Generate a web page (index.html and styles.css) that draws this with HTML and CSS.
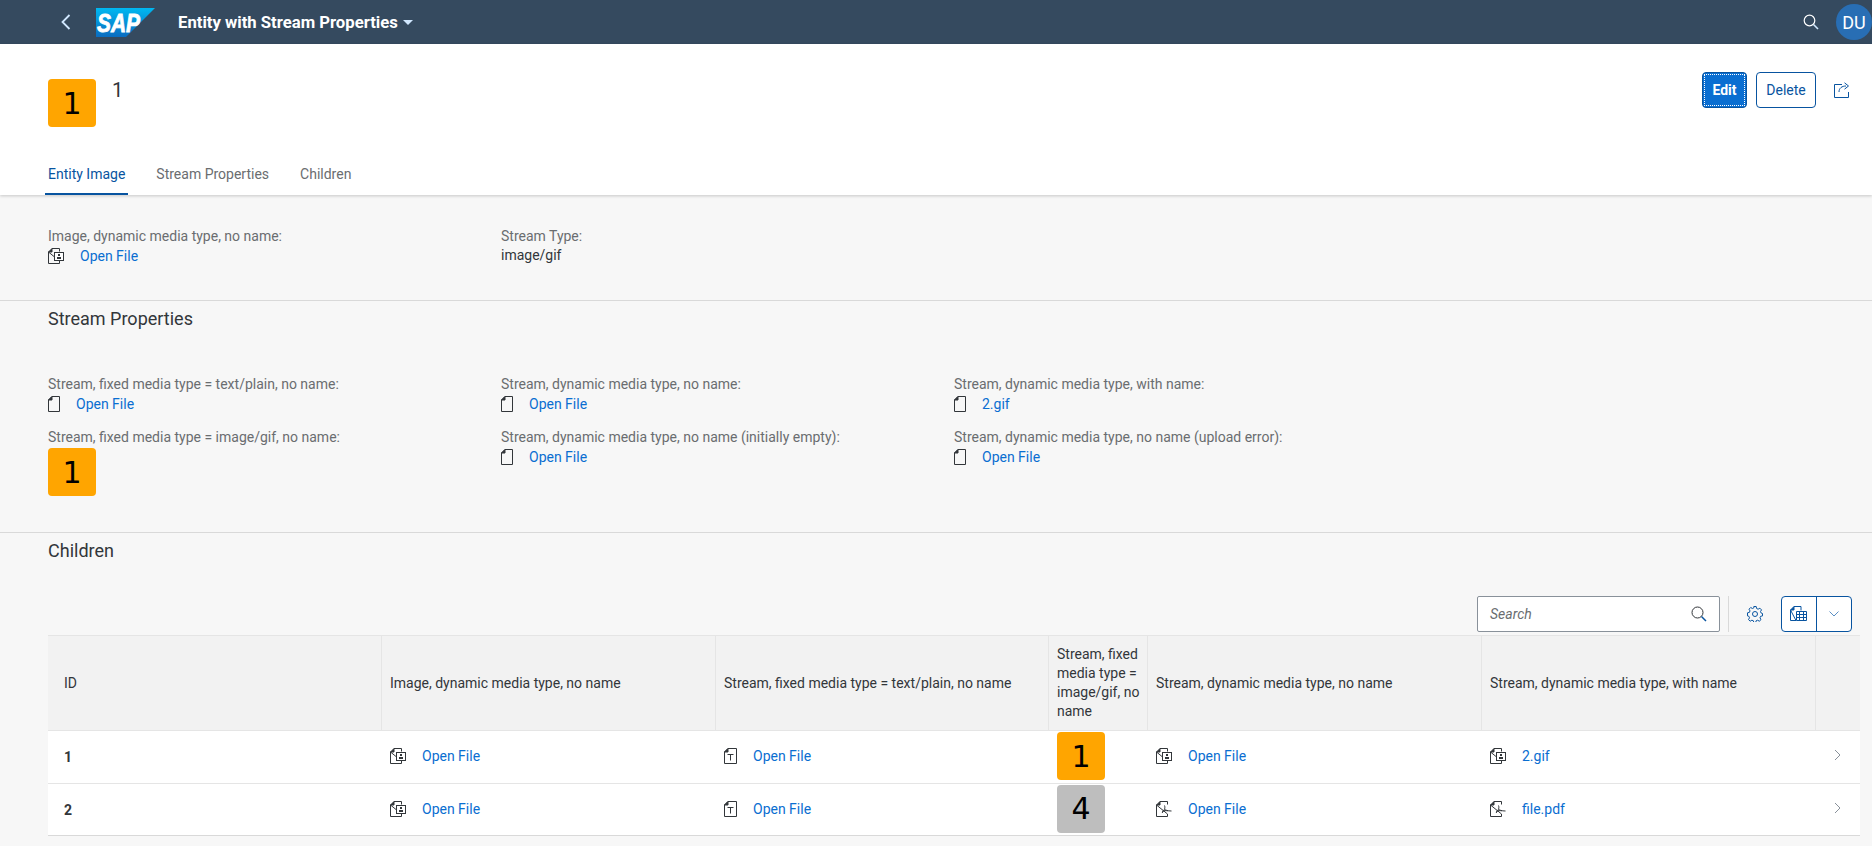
FILE: index.html
```html
<!DOCTYPE html>
<html lang="en">
<head>
    <meta charset="UTF-8">
    <meta name="viewport" content="width=device-width, initial-scale=1.0">
    <title>Entity with Stream Properties</title>
    <link rel="stylesheet" href="styles.css">
</head>
<body>
    <svg class="icon-defs" width="0" height="0">
        <symbol id="doc" viewBox="0 0 12 16">
            <path d="M4 .5h7.500v15H.5V4z" fill="none" stroke="#32363a"/>
            <path d="M4 .5V4H.5z" fill="#32363a" stroke="#32363a"/>
        </symbol>
        <symbol id="doc-image" viewBox="0 0 16 16">
            <path d="M4 .5h7.500v3M11.500 13v2.500H.5V4z" fill="none" stroke="#32363a"/>
            <path d="M4 .5V4H.5z" fill="#32363a" stroke="#32363a"/>
            <rect x="6.500" y="4.500" width="9" height="8" fill="#fff" stroke="#32363a"/>
            <rect x="10" y="6" width="2" height="2" fill="#32363a"/>
            <rect x="9" y="9" width="4" height="2" fill="#32363a"/>
        </symbol>
        <symbol id="doc-text" viewBox="0 0 13 16">
            <path d="M4 .5h8.500v15H.5V4z" fill="none" stroke="#32363a"/>
            <path d="M4 .5V4H.5z" fill="#32363a" stroke="#32363a"/>
            <path d="M3.500 6.500h6M6.500 6.500v6" fill="none" stroke="#32363a"/>
        </symbol>
        <symbol id="doc-pdf" viewBox="0 0 16 16">
            <path d="M4 .5h7.500v3M11.500 13v2.500H.5V4z" fill="none" stroke="#32363a"/>
            <path d="M4 .5V4H.5z" fill="#32363a" stroke="#32363a"/>
            <path d="M8.500 4.500c.8 2 .5 4-2.500 7.500M8.500 8c.8 1 3 2 7 2M6 10.500c2-1 4-1 6-.7" fill="none" stroke="#32363a"/>
        </symbol>
    </svg>

    <header class="shell">
        <svg class="shell-back" width="10" height="16" viewBox="0 0 10 16"><path d="M8.500 1L1.500 8l7 7" fill="none" stroke="#d1e8ff" stroke-width="1.800"/></svg>
        <svg class="shell-logo" width="59" height="29" viewBox="0 0 59 29">
            <defs>
                <linearGradient id="sapBlue" x1="0" y1="0" x2="0" y2="1">
                    <stop offset="0" stop-color="#00b8f1"/>
                    <stop offset="1" stop-color="#0a6cc0"/>
                </linearGradient>
            </defs>
            <path d="M0 0h59L30 29H0z" fill="url(#sapBlue)"/>
            <text x="1" y="24" class="shell-logo-text" textLength="43" lengthAdjust="spacingAndGlyphs">SAP</text>
        </svg>
        <span class="shell-title">Entity with Stream Properties</span>
        <span class="shell-caret"></span>
        <svg class="shell-search" width="16" height="16" viewBox="0 0 16 16"><circle cx="6.500" cy="6.500" r="5.300" fill="none" stroke="#fff" stroke-width="1.200"/><path d="M10.500 10.500l4.500 4.500" stroke="#d1e8ff" stroke-width="1.600"/></svg>
        <span class="shell-user">DU</span>
    </header>

    <section class="object-header">
        <div class="object-top">
            <div class="thumb thumb-orange">1</div>
            <div class="object-title">1</div>
            <div class="object-actions">
                <button class="btn btn-primary"><span class="btn-focus">Edit</span></button>
                <button class="btn btn-delete">Delete</button>
                <svg class="share-icon" width="16" height="16" viewBox="0 0 16 16"><path d="M8 2.500H.5v13h14V10" fill="none" stroke="#0854a0"/><path d="M5 10c0-4 3-6 7-6M10.500 .8L14.500 4l-4 3.200" fill="none" stroke="#0854a0"/></svg>
            </div>
        </div>
        <nav class="tabs">
            <a class="tab tab-active">Entity Image</a>
            <a class="tab">Stream Properties</a>
            <a class="tab">Children</a>
        </nav>
    </section>

    <section class="block block-image">
        <div class="fields">
            <div class="field">
                <div class="field-label">Image, dynamic media type, no name:</div>
                <div class="file"><svg class="ico ico-16"><use href="#doc-image"/></svg><a class="link">Open File</a></div>
            </div>
            <div class="field">
                <div class="field-label">Stream Type:</div>
                <div class="field-value">image/gif</div>
            </div>
        </div>
    </section>

    <section class="block block-streams">
        <h2 class="block-title">Stream Properties</h2>
        <div class="fields fields-streams">
            <div class="field">
                <div class="field-label">Stream, fixed media type = text/plain, no name:</div>
                <div class="file"><svg class="ico ico-12"><use href="#doc"/></svg><a class="link">Open File</a></div>
            </div>
            <div class="field">
                <div class="field-label">Stream, dynamic media type, no name:</div>
                <div class="file"><svg class="ico ico-12"><use href="#doc"/></svg><a class="link">Open File</a></div>
            </div>
            <div class="field">
                <div class="field-label">Stream, dynamic media type, with name:</div>
                <div class="file"><svg class="ico ico-12"><use href="#doc"/></svg><a class="link">2.gif</a></div>
            </div>
            <div class="field">
                <div class="field-label">Stream, fixed media type = image/gif, no name:</div>
                <div class="thumb thumb-orange thumb-field">1</div>
            </div>
            <div class="field">
                <div class="field-label">Stream, dynamic media type, no name (initially empty):</div>
                <div class="file"><svg class="ico ico-12"><use href="#doc"/></svg><a class="link">Open File</a></div>
            </div>
            <div class="field">
                <div class="field-label">Stream, dynamic media type, no name (upload error):</div>
                <div class="file"><svg class="ico ico-12"><use href="#doc"/></svg><a class="link">Open File</a></div>
            </div>
        </div>
    </section>

    <section class="block block-children">
        <h2 class="block-title">Children</h2>
        <div class="toolbar">
            <div class="search">
                <span class="search-text">Search</span>
                <svg width="16" height="16" viewBox="0 0 16 16"><circle cx="6.500" cy="6.500" r="5.500" fill="none" stroke="#32363a"/><path d="M10.500 10.500l4.500 4.500" stroke="#0854a0" stroke-width="1.500"/></svg>
            </div>
            <span class="toolbar-sep"></span>
            <svg class="gear" width="16" height="16" viewBox="0 0 16 16">
                <circle cx="8" cy="8" r="2.500" fill="none" stroke="#0854a0"/>
                <path d="M6.800 .5h2.400l.4 2 1.500.7 1.800-1 1.600 1.700-1 1.700.7 1.500 1.300.4v2.400l-1.900.4-.6 1.500 1 1.800-1.700 1.600-1.700-1-1.500.6-.4 1.900H6.800l-.4-1.900-1.500-.6-1.700 1-1.700-1.600 1-1.800-.6-1.500-1.400-.4V6.800l1.900-.4.6-1.500-1-1.700 1.700-1.700 1.700 1 1.500-.7z" fill="none" stroke="#0854a0"/>
            </svg>
            <div class="split-btn">
                <span class="split-main">
                    <svg width="18" height="16" viewBox="0 0 18 16"><path d="M4 .5h7v4M6 14.500H.5V4z" fill="none" stroke="#0854a0"/><path d="M4 .5V4H.5z" fill="#0854a0" stroke="#0854a0"/><path d="M6.500 5.500h10v9h-10zM6.500 8.500h10M6.500 11.500h10M9.500 5.500v9M13.500 5.500v9" fill="none" stroke="#0854a0"/></svg>
                </span>
                <span class="split-arrow">
                    <svg width="10" height="6" viewBox="0 0 10 6"><path d="M.5 .5L5 5 9.500 .5" fill="none" stroke="#5b8fc4"/></svg>
                </span>
            </div>
        </div>
        <table class="grid">
            <thead>
                <tr>
                    <th class="col-id">ID</th>
                    <th class="col-wide">Image, dynamic media type, no name</th>
                    <th class="col-text">Stream, fixed media type = text/plain, no name</th>
                    <th class="col-thumb">Stream, fixed media type = image/gif, no name</th>
                    <th class="col-wide">Stream, dynamic media type, no name</th>
                    <th class="col-wide">Stream, dynamic media type, with name</th>
                    <th></th>
                </tr>
            </thead>
            <tbody>
                <tr>
                    <td class="cell-id">1</td>
                    <td><div class="file"><svg class="ico ico-16"><use href="#doc-image"/></svg><a class="link">Open File</a></div></td>
                    <td><div class="file"><svg class="ico ico-13"><use href="#doc-text"/></svg><a class="link">Open File</a></div></td>
                    <td class="cell-thumb"><div class="thumb thumb-orange">1</div></td>
                    <td><div class="file"><svg class="ico ico-16"><use href="#doc-image"/></svg><a class="link">Open File</a></div></td>
                    <td><div class="file"><svg class="ico ico-16"><use href="#doc-image"/></svg><a class="link">2.gif</a></div></td>
                    <td class="cell-nav"><svg width="7" height="12" viewBox="0 0 7 12"><path d="M1 1l5 5-5 5" fill="none" stroke="#89919a"/></svg></td>
                </tr>
                <tr>
                    <td class="cell-id">2</td>
                    <td><div class="file"><svg class="ico ico-16"><use href="#doc-image"/></svg><a class="link">Open File</a></div></td>
                    <td><div class="file"><svg class="ico ico-13"><use href="#doc-text"/></svg><a class="link">Open File</a></div></td>
                    <td class="cell-thumb"><div class="thumb thumb-grey">4</div></td>
                    <td><div class="file"><svg class="ico ico-16"><use href="#doc-pdf"/></svg><a class="link">Open File</a></div></td>
                    <td><div class="file"><svg class="ico ico-16"><use href="#doc-pdf"/></svg><a class="link">file.pdf</a></div></td>
                    <td class="cell-nav"><svg width="7" height="12" viewBox="0 0 7 12"><path d="M1 1l5 5-5 5" fill="none" stroke="#89919a"/></svg></td>
                </tr>
            </tbody>
        </table>
    </section>
</body>
</html>
```

FILE: styles.css
```css
* {
    box-sizing: border-box;
}
body {
    margin: 0;
    background-color: #f7f7f7;
    color: #32363a;
    font-family: Roboto, Arial, sans-serif;
    font-size: 14px;
}
.icon-defs {
    display: block;
    height: 0;
}

/* shell bar */
.shell {
    display: flex;
    align-items: center;
    height: 44px;
    padding-left: 61px;
    background-color: #354a5f;
    color: #fff;
}
.shell-logo {
    margin-left: 25px;
}
.shell-logo-text {
    font-family: "Liberation Sans", Arial, sans-serif;
    font-size: 25px;
    font-weight: bold;
    font-style: italic;
    fill: #fff;
    stroke: #fff;
    stroke-width: 0.8px;
}
.shell-title {
    margin-left: 23px;
    font-size: 16.7px;
    font-weight: bold;
}
.shell-caret {
    margin-left: 5px;
    border-left: 5px solid transparent;
    border-right: 5px solid transparent;
    border-top: 5px solid #d1e8ff;
}
.shell-search {
    margin-left: auto;
}
.shell-user {
    display: flex;
    align-items: center;
    justify-content: center;
    width: 36px;
    height: 36px;
    margin-left: 17px;
    border-radius: 50%;
    background-color: #286eb4;
    font-size: 18px;
}

/* object header */
.object-header {
    height: 151px;
    background-color: #fff;
    box-shadow: 0 1px 3px rgba(0, 0, 0, 0.2);
    position: relative;
}
.object-top {
    display: flex;
    height: 118px;
    padding: 35px 22px 0 48px;
}
.thumb {
    display: flex;
    align-items: center;
    justify-content: center;
    width: 48px;
    height: 48px;
    border-radius: 4px;
    color: #000;
    font-family: "DejaVu Sans", sans-serif;
    font-size: 30px;
}
.thumb-orange {
    background-color: #ffa500;
}
.thumb-grey {
    background-color: #bebebe;
}
.object-title {
    margin-left: 16px;
    font-size: 20px;
    line-height: 22px;
}
.object-actions {
    display: flex;
    align-items: flex-start;
    margin-left: auto;
    margin-top: -7px;
}
.btn {
    height: 36px;
    margin-left: 9px;
    padding: 0;
    border: 1px solid #0854a0;
    border-radius: 4px;
    background-color: #fff;
    color: #0854a0;
    font-family: inherit;
    font-size: 14px;
}
.btn-delete {
    width: 60px;
}
.btn-primary {
    width: 45px;
    padding: 1px;
    background-color: #0a6ed1;
    color: #fff;
    font-weight: bold;
}
.btn-focus {
    display: flex;
    align-items: center;
    justify-content: center;
    height: 100%;
    border: 1px dotted #fff;
}
.share-icon {
    margin: 10px 0 0 18px;
}
.tabs {
    display: flex;
    gap: 25px;
    padding-left: 45px;
}
.tab {
    height: 33px;
    padding: 0 3px;
    color: #6a6d70;
    line-height: 25px;
}
.tab-active {
    border-bottom: 2px solid #0854a0;
    color: #0854a0;
}

/* blocks */
.block {
    padding: 6px 12px 0 48px;
    border-bottom: 1px solid #d9d9d9;
}
.block-image {
    height: 106px;
    padding-top: 31px;
}
.block-streams {
    height: 232px;
}
.block-children {
    border-bottom: none;
}
.block-title {
    margin: 0;
    font-size: 18px;
    font-weight: normal;
    line-height: 24px;
}
.fields {
    display: grid;
    grid-template-columns: repeat(3, 453px);
}
.fields-streams {
    margin-top: 43px;
    row-gap: 14px;
}
.field-label {
    color: #6a6d70;
    line-height: 20px;
}
.field-value {
    line-height: 19px;
}
.thumb-field {
    margin-top: 1px;
}
.file {
    display: flex;
    align-items: center;
    height: 19px;
    gap: 16px;
}
.ico {
    flex: none;
    height: 16px;
}
.ico-12 {
    width: 12px;
}
.ico-13 {
    width: 13px;
}
.ico-16 {
    width: 16px;
}
.link {
    color: #0a6ed1;
}

/* table */
.toolbar {
    display: flex;
    align-items: center;
    height: 36px;
    margin-top: 33px;
    padding-right: 8px;
    justify-content: flex-end;
}
.search {
    display: flex;
    align-items: center;
    justify-content: space-between;
    width: 243px;
    height: 36px;
    padding: 0 12px;
    border: 1px solid #89919a;
    border-radius: 2px;
    background-color: #fff;
}
.search-text {
    color: #6a6d70;
    font-style: italic;
}
.toolbar-sep {
    width: 1px;
    height: 36px;
    margin-left: 8px;
    background-color: #d9d9d9;
}
.gear {
    margin-left: 18px;
}
.split-btn {
    display: flex;
    width: 71px;
    height: 36px;
    margin-left: 18px;
    border: 1px solid #0854a0;
    border-radius: 4px;
    background-color: #fff;
}
.split-main {
    display: flex;
    align-items: center;
    justify-content: center;
    width: 35px;
    border-right: 1px solid #0854a0;
}
.split-arrow {
    display: flex;
    align-items: center;
    justify-content: center;
    flex: 1;
}
.grid {
    width: 1812px;
    margin-top: 3px;
    border-collapse: separate;
    border-spacing: 0;
    table-layout: fixed;
}
.grid th {
    height: 96px;
    padding: 0 8px;
    border-top: 1px solid #e5e5e5;
    border-bottom: 1px solid #e5e5e5;
    border-right: 1px solid #e5e5e5;
    background-color: #f2f2f2;
    font-weight: normal;
    line-height: 19px;
    text-align: left;
}
.grid th:last-child {
    border-right: none;
}
.grid td {
    height: 52px;
    padding: 0 8px 2px;
    border-bottom: 1px solid #e5e5e5;
    background-color: #fff;
}
.grid tbody tr:first-child td {
    height: 53px;
}
.grid tr:last-child td {
    border-bottom-color: #d9d9d9;
}
.grid .col-id {
    width: 334px;
    padding-left: 16px;
}
.col-wide {
    width: 334px;
}
.col-text {
    width: 333px;
}
.grid .col-thumb {
    width: 99px;
    padding-right: 4px;
}
.cell-id {
    font-size: 14px;
    font-weight: bold;
}
.grid .cell-id {
    padding: 0 8px 0 16px;
}
.grid .cell-nav {
    padding-left: 18px;
}
```
